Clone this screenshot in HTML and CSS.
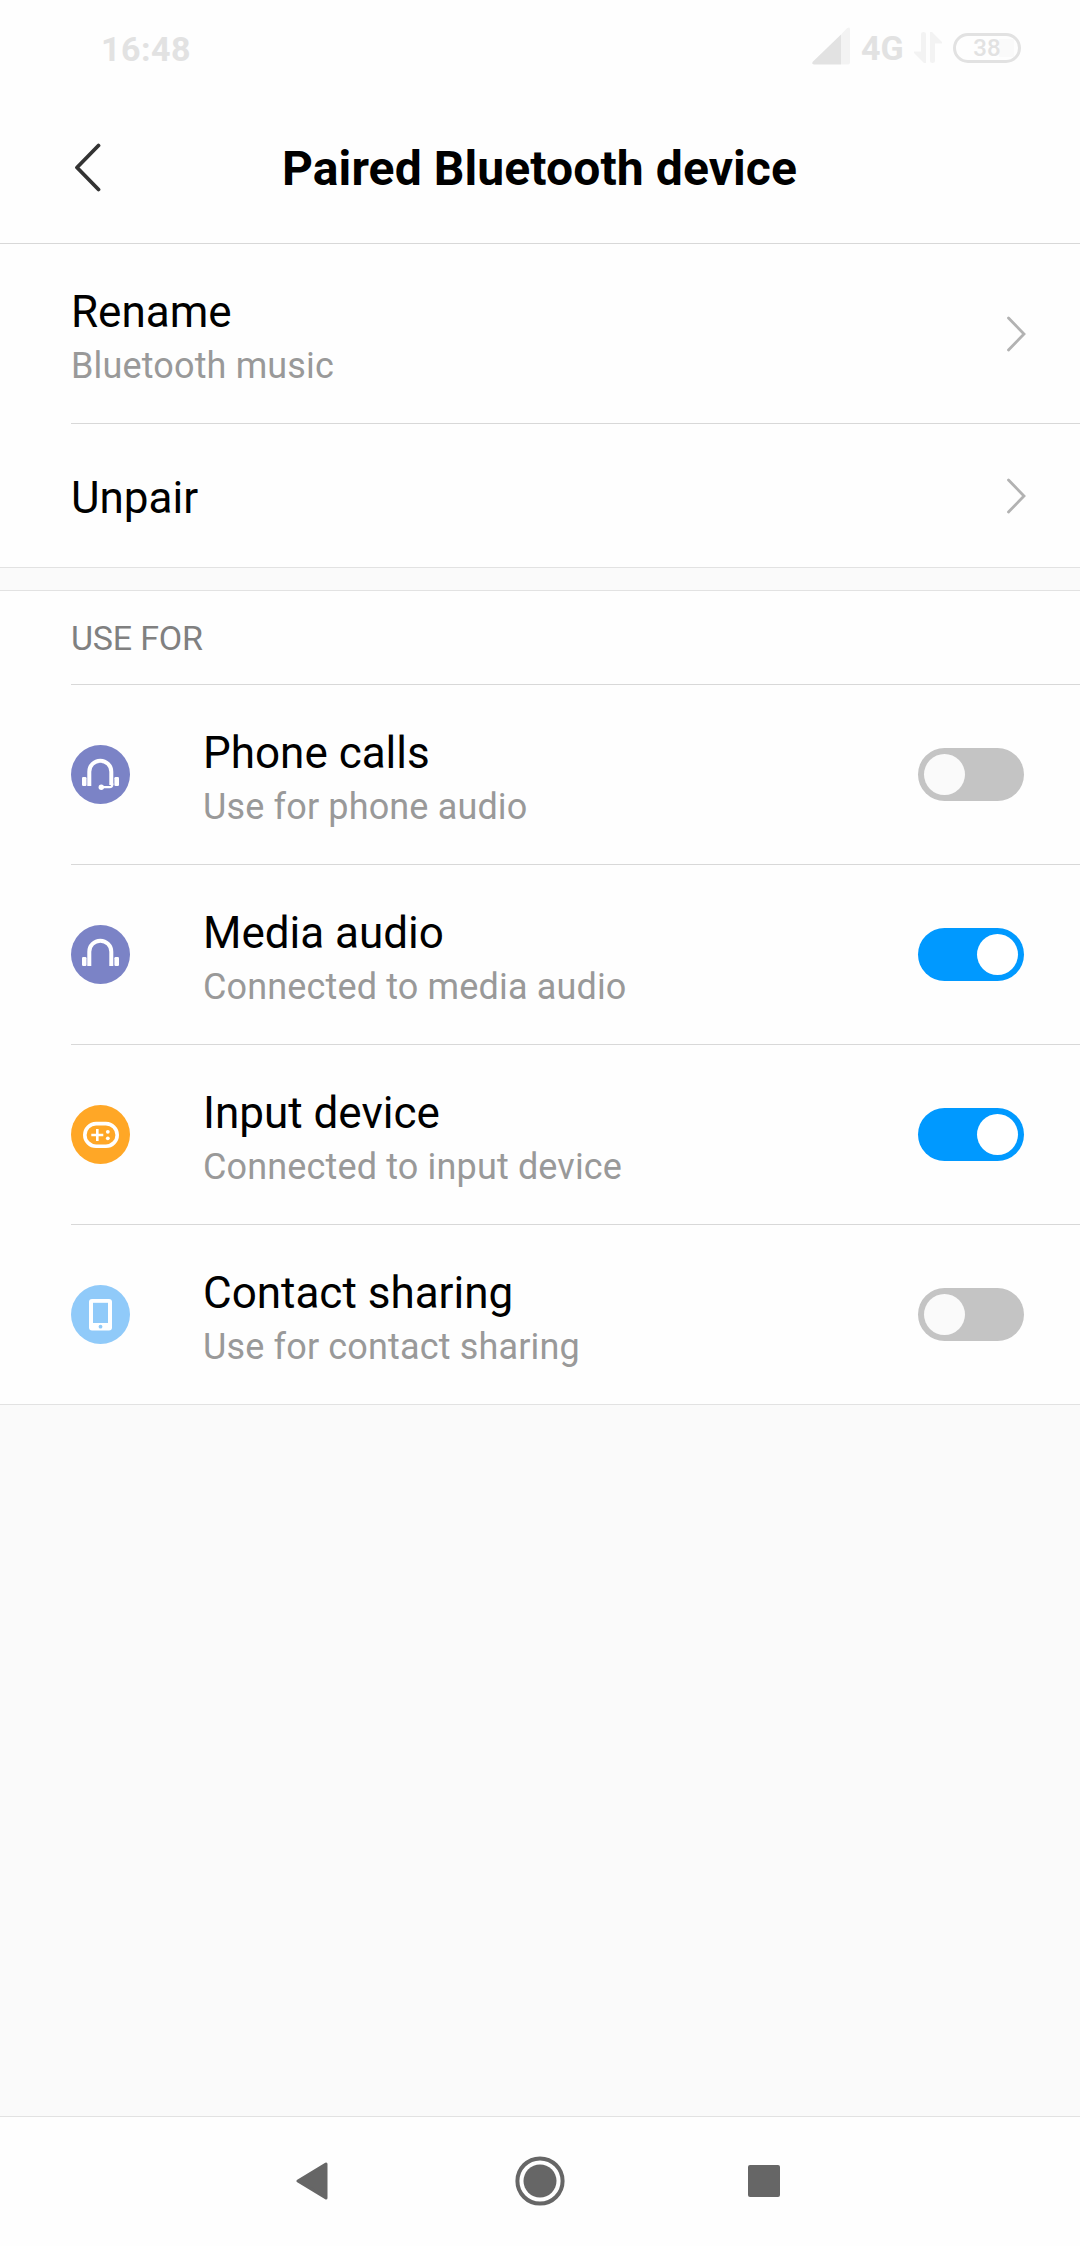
FILE: index.html
```
<!DOCTYPE html>
<html lang="en">

<head>
    <meta charset="utf-8">
    <title>Paired Bluetooth device</title>
    <link rel="stylesheet" href="styles.css">
</head>

<body>
    <div class="status-bar">
        <span class="clock">16:48</span>
        <div class="status-icons">
            <svg class="signal" width="38" height="38" viewBox="0 0 38 38">
                <path d="M29 7.500 35 1.300Q38 -1 38 2.500V35.500Q38 37.500 36 37.500H29Z" fill="#f3f3f3" />
                <path d="M29 7.500V37.500H2Q-1 37 1 34.500Z" fill="#e2e2e2" />
            </svg>
            <span class="network">4G</span>
            <svg class="arrows" width="28" height="31" viewBox="0 0 28 31">
                <path d="M7 2Q7 0 9.500 0T12 2V31H10L0 21V19.500H7Z" fill="#f3f3f3" />
                <path d="M16 0H18L28 10V11.500H21V29Q21 31 18.500 31T16 29Z" fill="#f3f3f3" />
            </svg>
            <div class="battery"><span class="level">38</span></div>
        </div>
    </div>

    <div class="header">
        <svg class="back" width="29" height="51" viewBox="0 0 29 51">
            <path d="M26.500 3.500 5 25.500 26.500 47.500" fill="none" stroke="#333" stroke-width="3.800" stroke-linecap="round" stroke-linejoin="round" />
        </svg>
        <h1>Paired Bluetooth device</h1>
    </div>

    <div class="section">
        <div class="row">
            <div class="text">
                <div class="label">Rename</div>
                <div class="summary">Bluetooth music</div>
            </div>
            <svg class="chevron" width="20" height="36" viewBox="0 0 20 36">
                <path d="M2.500 2 18 18 2.500 34" />
            </svg>
        </div>
        <div class="row short">
            <div class="text">
                <div class="label">Unpair</div>
            </div>
            <svg class="chevron" width="20" height="36" viewBox="0 0 20 36">
                <path d="M2.500 2 18 18 2.500 34" />
            </svg>
        </div>
    </div>

    <div class="section profiles">
        <h2>USE FOR</h2>
        <div class="row">
            <svg class="icon" width="59" height="59" viewBox="0 0 59 59">
                <circle cx="29.500" cy="29.500" r="29.500" fill="#7b83c6" />
                <path d="M18.300 41V26.700a11 11 0 0 1 22 0V40" fill="none" stroke="#fff" stroke-width="4" />
                <path d="M41.300 38.500V39.500Q41.300 42.200 38.600 42.200H30.500" fill="none" stroke="#fff" stroke-width="2.200" />
                <rect x="11" y="32" width="4.500" height="9" rx="1.200" fill="#fff" />
                <rect x="43.400" y="32" width="4.600" height="9" rx="1.200" fill="#fff" />
                <circle cx="30.300" cy="42.300" r="2.700" fill="#fff" />
            </svg>
            <div class="text">
                <div class="label">Phone calls</div>
                <div class="summary">Use for phone audio</div>
            </div>
            <div class="toggle"></div>
        </div>
        <div class="row">
            <svg class="icon" width="59" height="59" viewBox="0 0 59 59">
                <circle cx="29.500" cy="29.500" r="29.500" fill="#7b83c6" />
                <path d="M18.300 41V26.700a11 11 0 0 1 22 0V41" fill="none" stroke="#fff" stroke-width="4" />
                <rect x="11" y="32" width="4.500" height="9" rx="1.200" fill="#fff" />
                <rect x="43.400" y="32" width="4.600" height="9" rx="1.200" fill="#fff" />
            </svg>
            <div class="text">
                <div class="label">Media audio</div>
                <div class="summary">Connected to media audio</div>
            </div>
            <div class="toggle on"></div>
        </div>
        <div class="row">
            <svg class="icon" width="59" height="59" viewBox="0 0 59 59">
                <circle cx="29.500" cy="29.500" r="29.500" fill="#ffa726" />
                <rect x="13.800" y="18.600" width="32.400" height="22.600" rx="11.300" fill="none" stroke="#fff" stroke-width="3.600" />
                <path d="M20.300 30H32.300M26.300 24V36" stroke="#fff" stroke-width="2.600" />
                <circle cx="36.800" cy="26.800" r="1.900" fill="#fff" />
                <circle cx="36.800" cy="33.300" r="1.900" fill="#fff" />
            </svg>
            <div class="text">
                <div class="label">Input device</div>
                <div class="summary">Connected to input device</div>
            </div>
            <div class="toggle on"></div>
        </div>
        <div class="row">
            <svg class="icon" width="59" height="59" viewBox="0 0 59 59">
                <circle cx="29.500" cy="29.500" r="29.500" fill="#90caf9" />
                <rect x="18" y="14" width="23" height="31.500" rx="3" fill="#fff" />
                <rect x="22" y="17.800" width="15" height="20.200" fill="#90caf9" />
                <circle cx="29.500" cy="41.700" r="1.900" fill="#90caf9" />
            </svg>
            <div class="text">
                <div class="label">Contact sharing</div>
                <div class="summary">Use for contact sharing</div>
            </div>
            <div class="toggle"></div>
        </div>
    </div>

    <div class="nav-bar">
        <svg width="32" height="38" viewBox="0 0 32 38">
            <path d="M2 19 30 2V36Z" fill="#666" stroke="#666" stroke-width="3" stroke-linejoin="round" />
        </svg>
        <svg class="home" width="50" height="50" viewBox="0 0 50 50">
            <circle cx="25" cy="25" r="22.600" fill="none" stroke="#666" stroke-width="4" />
            <circle cx="25" cy="25" r="16.500" fill="#666" />
        </svg>
        <svg width="32" height="32" viewBox="0 0 32 32">
            <rect width="32" height="32" rx="2" fill="#666" />
        </svg>
    </div>
</body>

</html>
```
FILE: styles.css
```
:root {
    --surface: #fefefe;
    --page: #fafafa;
    --divider: #d8d8d8;
    --edge: #e2e2e2;
    --status: #e2e2e2;
}

* {
    box-sizing: border-box;
}

body {
    font-family: Roboto, sans-serif;
    margin: 0;
    height: 2246px;
    display: flex;
    flex-direction: column;
    background-color: var(--page);
    color: #000;
}

svg {
    display: block;
    flex: none;
}

.status-bar {
    display: flex;
    justify-content: space-between;
    height: 92px;
    padding: 27px 59px 0 101px;
    background-color: var(--surface);
    color: var(--status);
}

.clock {
    font-size: 34px;
    font-weight: 700;
    line-height: 40px;
    letter-spacing: 0.5px;
    padding-top: 2px;
}

.status-icons {
    display: flex;
    align-items: flex-start;
}

.network {
    width: 42px;
    margin-left: 11px;
    padding-top: 1px;
    font-size: 34px;
    font-weight: 700;
    line-height: 40px;
}

.arrows {
    margin: 5px 11px 0 11px;
}

.battery {
    width: 68px;
    height: 30px;
    margin-top: 6px;
    border: 3px solid var(--status);
    border-radius: 15px;
    background: linear-gradient(#fafafa, #fafafa) 43px 3px / 15px 18px no-repeat;
    text-align: center;
}

.level {
    display: block;
    font-size: 24px;
    font-weight: 500;
    line-height: 25px;
}

.header {
    display: flex;
    align-items: center;
    height: 152px;
    padding: 0 73px 0 72px;
    border-bottom: 1px solid var(--divider);
    background-color: var(--surface);
}

.header h1 {
    flex: 1;
    margin: 2px 29px 0 0;
    font-size: 48px;
    font-weight: 700;
    letter-spacing: 0.1px;
    text-align: center;
}

.section {
    background-color: var(--surface);
    border-bottom: 1px solid var(--edge);
}

.profiles {
    margin-top: 22px;
    border-top: 1px solid var(--edge);
}

.profiles h2 {
    height: 94px;
    margin: 0 0 0 71px;
    padding-top: 27px;
    border-bottom: 1px solid var(--divider);
    color: #808080;
    font-size: 34px;
    font-weight: 400;
    line-height: 40px;
    letter-spacing: -0.2px;
}

.row {
    display: flex;
    align-items: center;
    height: 180px;
    margin-left: 71px;
    padding-right: 56px;
    border-bottom: 1px solid var(--divider);
}

.row:last-child {
    height: 179px;
    border-bottom: none;
}

.row.short {
    height: 143px;
}

.icon {
    margin-right: 73px;
}

.text {
    flex: 1;
    padding-top: 5px;
}

.label {
    font-size: 44px;
    line-height: 52px;
}

.summary {
    margin-top: 7px;
    color: #999;
    font-size: 36px;
    line-height: 42px;
    letter-spacing: 0.15px;
}

.chevron {
    margin-right: -2px;
}

.chevron path {
    fill: none;
    stroke: #b2b2b2;
    stroke-width: 2.8;
    stroke-linecap: round;
}

.toggle {
    display: flex;
    width: 106px;
    height: 53px;
    padding: 6px;
    border-radius: 27px;
    background-color: #c4c4c4;
}

.toggle::before {
    content: "";
    width: 41px;
    height: 41px;
    border-radius: 50%;
    background-color: #fafafa;
}

.toggle.on {
    justify-content: flex-end;
    background-color: #0099ff;
}

.toggle.on::before {
    background-color: #fff;
}

.nav-bar {
    display: flex;
    align-items: center;
    justify-content: space-between;
    height: 130px;
    margin-top: auto;
    padding: 0 300px 1px 296px;
    border-top: 1px solid var(--edge);
    background-color: var(--surface);
}

.home {
    margin-left: 4px;
}
```
